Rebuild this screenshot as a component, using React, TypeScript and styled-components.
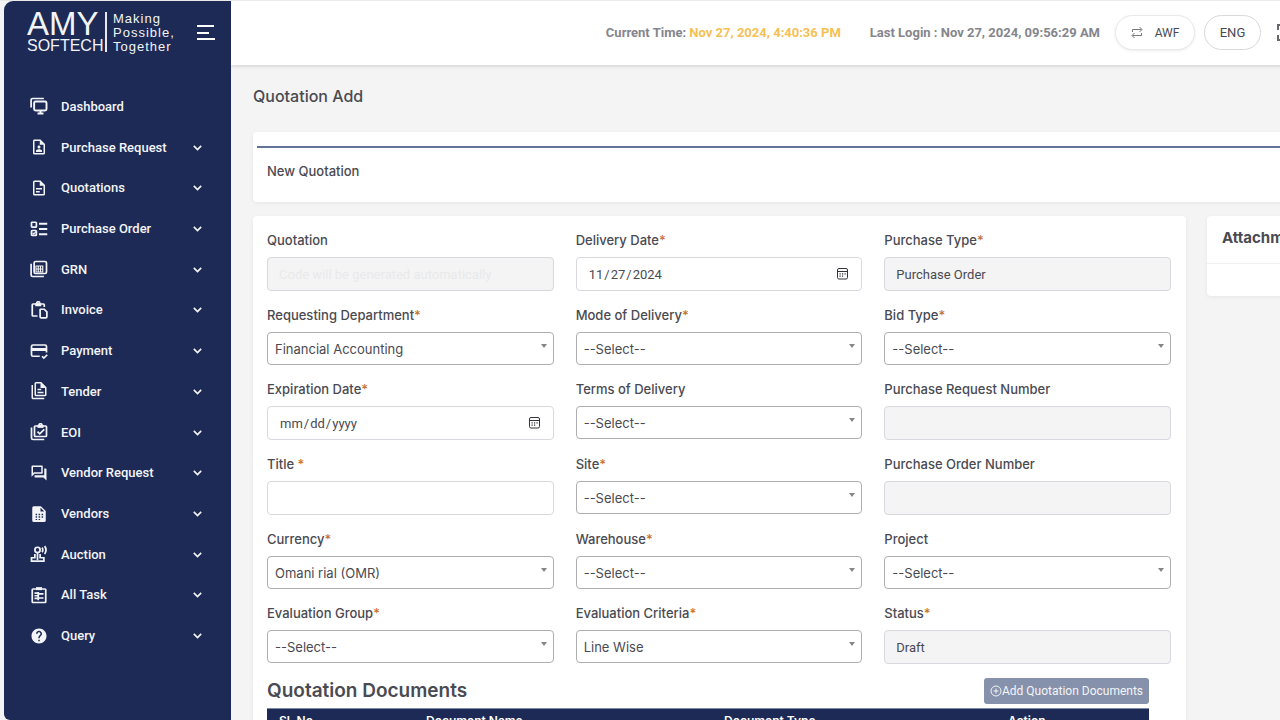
import React, { ReactNode, useId } from "react";
import styled, { createGlobalStyle, css } from "styled-components";
import { MdOutlineQuestionAnswer, MdHelp } from "react-icons/md";

const navy = "#1c2a55";
const ink = "#4a4a52";

const Global = createGlobalStyle`
  *, *::before, *::after { box-sizing: border-box; }
  body { margin: 0; background: #f4f4f4; }
  body, table, select { font-family: Inter, Roboto, sans-serif; font-size: 13px; color: ${ink}; }
  button, input { font-family: Roboto, Inter, sans-serif; font-size: 13px; color: ${ink}; }
  h1, h2, h3, p, ul { margin: 0; padding: 0; }
`;

const Shell = styled.div`
  display: flex;
  height: 100vh;
  overflow: hidden;
  padding-left: 4px;
  border-top: 1px solid #e9e9e9;
`;

const Sidebar = styled.aside`
  flex: 0 0 227px;
  background: ${navy};
  border-radius: 9px 0 0 6px;
  color: #f3f4f8;
`;

const Brand = styled.div`
  display: flex;
  align-items: flex-start;
  height: 85px;
  padding: 7px 16px 0 23px;
  font-family: "Liberation Sans", Arial, sans-serif;
`;

const BrandName = styled.div`
  width: 78px;
  height: 44px;
  padding-top: 2px;
`;

const BrandTop = styled.div`
  font-size: 33px;
  line-height: 28px;
`;

const BrandBottom = styled.div`
  font-size: 16px;
  line-height: 16px;
`;

const Slogan = styled.div`
  height: 40px;
  margin-top: 4px;
  padding-left: 6px;
  border-left: 2px solid #e7e9f0;
  font-size: 13px;
  line-height: 14px;
  letter-spacing: 1px;
  white-space: pre-line;
`;

const MenuButton = styled.button`
  display: flex;
  margin: 16px 0 0 auto;
  padding: 0;
  border: 0;
  background: none;
  color: #fff;
`;

const NavList = styled.ul`
  display: flex;
  flex-direction: column;
  height: 570px;
  list-style: none;
`;

const NavItem = styled.li`
  display: flex;
  flex: 1;
`;

const NavLink = styled.a`
  display: flex;
  flex: 1;
  align-items: center;
  padding: 0 28px 0 26px;
  color: inherit;
  font-family: Roboto, Inter, sans-serif;
  font-weight: 500;
  text-decoration: none;
`;

const NavText = styled.span`
  flex: 1;
  margin-left: 13px;
`;

const Main = styled.div`
  flex: 1;
  min-width: 0;
  overflow: hidden;
`;

const Header = styled.header`
  display: flex;
  align-items: center;
  justify-content: flex-end;
  height: 64px;
  margin-right: -16px;
  padding-bottom: 1px;
  background: #fff;
  box-shadow: 0 1px 4px rgba(0, 0, 0, 0.16);
  font-family: Roboto, Inter, sans-serif;
  font-weight: 700;
  color: #85868d;
  white-space: nowrap;
`;

const Stamp = styled.span`
  margin-right: 29px;
  & + & { margin-right: 15px; }
`;

const Accent = styled.span`
  color: #f6bf54;
`;

const Pill = styled.button<{ $raised?: boolean }>`
  display: flex;
  align-items: center;
  justify-content: center;
  gap: 12px;
  width: ${(p) => (p.$raised ? 80 : 57)}px;
  height: 35px;
  margin-right: ${(p) => (p.$raised ? 9 : 16)}px;
  padding: 0;
  border: 1px solid ${(p) => (p.$raised ? "#e9e9ec" : "#d9d9dc")};
  border-radius: 18px;
  background: #fff;
  box-shadow: ${(p) => (p.$raised ? "0 1px 3px rgba(0,0,0,.08)" : "none")};
  font-size: ${(p) => (p.$raised ? 12 : 13)}px;
`;

const IconButton = styled.button`
  display: flex;
  padding: 0;
  border: 0;
  background: none;
  color: #66676d;
`;

const Content = styled.main`
  width: calc(100% + 246px);
  padding: 21px 22px;
`;

const PageTitle = styled.h1`
  font-size: 16px;
  line-height: 20px;
  font-weight: 500;
`;

const Card = styled.section`
  background: #fff;
  border-radius: 4px;
  box-shadow: 0 1px 4px rgba(0, 0, 0, 0.06);
`;

const TitleCard = styled(Card)`
  height: 70px;
  margin: 26px 0 14px;
  padding: 14px 4px 0;
`;

const CardTitle = styled.h2`
  padding: 14px 10px;
  border-top: 2px solid #64739a;
  font-size: 13px;
  line-height: 18px;
  font-weight: 500;
`;

const Columns = styled.div`
  display: grid;
  grid-template-columns: minmax(0, 933fr) minmax(0, 297fr);
  align-items: start;
  gap: 21px;
`;

const FormCard = styled(Card)`
  padding: 15px 15px 40px 14px;
`;

const Fields = styled.form`
  display: grid;
  grid-template-columns: repeat(3, minmax(0, 1fr));
  gap: 15px 22px;
`;

const FieldBox = styled.div`
  display: flex;
  flex-direction: column;
  gap: 8px;
`;

const Label = styled.label`
  font-weight: 500;
  line-height: 18px;
`;

const Star = styled.span`
  color: #c8712f;
`;

const ControlWrap = styled.div<{ $arrow?: boolean }>`
  position: relative;
  ${(p) =>
    p.$arrow &&
    css`
      &::after {
        content: "";
        position: absolute;
        top: 12px;
        right: 7px;
        border: solid transparent;
        border-width: 4px 3px 0;
        border-top-color: #85858a;
        pointer-events: none;
      }
    `}
  svg {
    position: absolute;
    top: 10px;
    right: 13px;
    pointer-events: none;
  }
`;

const Input = styled.input`
  display: block;
  width: 100%;
  height: 34px;
  padding: 0 11px;
  border: 1px solid #d8d8de;
  border-radius: 4px;
  background: #fff;
  outline: none;
  &:read-only:not([type="date"]) { background: #f4f4f4; }
  &::placeholder { color: #e9e9eb; opacity: 1; }
  &::-webkit-calendar-picker-indicator { opacity: 0; }
  &::-webkit-datetime-edit-fields-wrapper { padding: 0; }
`;

const Select = styled.select`
  display: block;
  width: 100%;
  height: 33px;
  padding: 0 7px;
  border: 1px solid #aeaeb0;
  border-radius: 4px;
  background: #fff;
  appearance: none;
`;

const DocsHead = styled.div`
  display: flex;
  align-items: center;
  justify-content: space-between;
  margin: 14px 22px 4px 0;
`;

const DocsTitle = styled.h2`
  font-size: 19px;
  line-height: 22px;
  font-weight: 600;
`;

const AddButton = styled.button`
  display: flex;
  align-items: center;
  justify-content: center;
  width: 165px;
  height: 26px;
  padding: 0;
  border: 0;
  border-radius: 3px;
  background: #8691ab;
  color: #f3f5f9;
  font-size: 12px;
  white-space: nowrap;
`;

const DocsTable = styled.table`
  width: calc(100% - 22px);
  border-collapse: collapse;
  table-layout: fixed;
  border-top: 1px solid #7f8aa6;
`;

const Th = styled.th<{ $w?: number }>`
  width: ${(p) => (p.$w ? `${p.$w}px` : "auto")};
  height: 24px;
  padding: 0 12px;
  background: ${navy};
  color: #fff;
  font-size: 12px;
  font-weight: 600;
  text-align: left;
`;

const SideTitle = styled.h3`
  padding: 12px 15px 15px;
  border-bottom: 1px solid #f1f1f1;
  font-size: 15px;
  line-height: 20px;
  font-weight: 700;
`;

const SideBody = styled.div`
  height: 32px;
`;

const Glyph = ({ children, size = 18 }: { children: ReactNode; size?: number }) => (
  <svg width={size} height={size} viewBox="0 0 24 24" fill="currentColor" fillRule="evenodd" aria-hidden="true">
    {children}
  </svg>
);

const Line = ({ children, size = 18, w = 2.3 }: { children: ReactNode; size?: number; w?: number }) => (
  <svg width={size} height={size} viewBox="0 0 24 24" fill="none" stroke="currentColor" strokeWidth={w} aria-hidden="true">
    {children}
  </svg>
);

const nav: { text: string; icon: ReactNode }[] = [
  { text: "Dashboard", icon: <Line><path d="M1.500 14V4a2 2 0 0 1 2-2h15" /><rect x="5.500" y="6" width="16.500" height="12" rx="2" strokeWidth="2.600" /><path d="M10 22h8M14 18v4" strokeWidth="2.600" /></Line> },
  { text: "Purchase Request", icon: <Glyph><path d="M14,2H6C4.900,2 4,2.900 4,4V20A2,2 0 0,0 6,22H18A2,2 0 0,0 20,20V8L14,2M18,20H6V4H13V9H18V20M14,12C14,13.100 13.100,14 12,14C10.900,14 10,13.100 10,12C10,10.900 10.900,10 12,10C13.100,10 14,10.900 14,12M16,17V18.500H8V17C8,15.700 10.700,15 12,15C13.300,15 16,15.700 16,17Z" /></Glyph> },
  { text: "Quotations", icon: <Glyph><path d="M6,2A2,2 0 0,0 4,4V20A2,2 0 0,0 6,22H18A2,2 0 0,0 20,20V8L14,2H6M6,4H13V9H18V20H6V4M8,12V14H16V12H8M8,16V18H13V16H8Z" /></Glyph> },
  { text: "Purchase Order", icon: <Line><rect x="2" y="3" width="6.500" height="6.500" rx="1" /><rect x="2" y="14" width="6.500" height="6.500" rx="1" /><path d="M3.500 17l1.500 1.500 3-3" strokeWidth="1.500" /><path d="M12 5h11M12 12h11M12 19h11" strokeWidth="2.600" /></Line> },
  { text: "GRN", icon: <Line><path d="M1.500 5v15a2 2 0 0 0 2 2h15" /><rect x="5.500" y="2" width="16.500" height="16" rx="2" /><path d="M8 8h9v8H8zM8 12h9M11 8v8M14 8v8" strokeWidth="1.500" /></Line> },
  { text: "Invoice", icon: <Line><path d="M10 20H4a1 1 0 0 1-1-1V5a1 1 0 0 1 1-1h14a1 1 0 0 1 1 1v3" /><path d="M7 3h8v4H7z" fill="currentColor" stroke="none" /><path d="M9 3a2 2 0 0 1 4 0" /><path d="M14 11h5l3.500 3.500V21a1.500 1.500 0 0 1-1.500 1.500h-6a1.500 1.500 0 0 1-1.500-1.500v-9.500z" /></Line> },
  { text: "Payment", icon: <Line><path d="M13 19H4a2 2 0 0 1-2-2V6a2 2 0 0 1 2-2h16a2 2 0 0 1 2 2v8" /><path d="M2 8h20v4H2z" fill="currentColor" stroke="none" /><path d="M16 19l2.500 2.500 4.500-4.500" /></Line> },
  { text: "Tender", icon: <Glyph><path d="M8 0a2 2 0 0 0-2 2v15a2 2 0 0 0 2 2h12a2 2 0 0 0 2-2V7l-7-7H8m0 2h6v6h6v9H8V2m2 7v2h5V9h-5m0 4v2h8v-2h-8M2 4v17a2 2 0 0 0 2 2h15v-2H4V4H2z" /></Glyph> },
  { text: "EOI", icon: <Line><path d="M2 6v14a2 2 0 0 0 2 2h15" /><rect x="6" y="4" width="16" height="14" rx="1" /><path d="M10 2.500h8v4h-8z" fill="currentColor" stroke="none" /><path d="M12 3a2 2 0 0 1 4 0" /><path d="M10 11.500l3 3 6-6" /></Line> },
  { text: "Vendor Request", icon: <MdOutlineQuestionAnswer size={18} /> },
  { text: "Vendors", icon: <Glyph><path d="M5 1.500a2 2 0 0 0-2 2v17a2 2 0 0 0 2 2h14a2 2 0 0 0 2-2V8l-6.500-6.500H5M14 3.500l5 5h-5v-5M7.500 11.500h2v2h-2v-2m4 0h2v2h-2v-2m4 0h2v2h-2v-2m-8 3.500h2v2h-2v-2m4 0h2v2h-2v-2m4 0h2v2h-2v-2m-8 3.500h2v1.500h-2v-1.500m4 0h2v1.500h-2v-1.500" /></Glyph> },
  { text: "Auction", icon: <Line><circle cx="10" cy="6.500" r="3.500" /><path d="M10 10v10M6.500 12v5H2V21.500h16.500V17h-5v-5" /><path d="M16 3.500a5 5 0 0 1 0 6M19.500 1.500a9 9 0 0 1 0 10.500" /></Line> },
  { text: "All Task", icon: <Line><rect x="3" y="4" width="18" height="18" rx="1" /><path d="M8 1.500h8v4H8z" fill="currentColor" stroke="none" /><path d="M6 9.500h4M6 13h4M6 16.500h4M12 10.500h6M12 16h6M11 8v11" /></Line> },
  { text: "Query", icon: <MdHelp size={18} /> },
];

const Chevron = () => (
  <Line size={11} w={3.6}><path d="M4 8.500l8 8 8-8" /></Line>
);

const CalendarIcon = () => (
  <svg width="13" height="13" viewBox="0 0 13 13" fill="none" stroke="#333338" aria-hidden="true">
    <rect x="1.500" y="1.500" width="10" height="10.500" rx="1.500" />
    <path d="M1.500 4.500h10" />
    <path d="M3.500 6.800h1.200M6 6.800h1.200M8.500 6.800h1.200M3.500 9.200h1.200M6 9.200h1.200" strokeWidth="1.300" />
  </svg>
);

type FieldProps = {
  label: string;
  required?: boolean;
  kind: "select" | "text" | "readonly" | "date";
  value?: string;
  placeholder?: string;
};

const Field = ({ label, required, kind, value = "", placeholder }: FieldProps) => {
  const id = useId();
  return (
    <FieldBox>
      <Label htmlFor={id}>
        {label}
        {required && <Star>*</Star>}
      </Label>
      <ControlWrap $arrow={kind === "select"}>
        {kind === "select" ? (
          <Select id={id} defaultValue={value}>
            <option>{value}</option>
          </Select>
        ) : (
          <Input
            id={id}
            type={kind === "date" ? "date" : "text"}
            defaultValue={value}
            placeholder={placeholder}
            readOnly={kind === "readonly"}
          />
        )}
        {kind === "date" && <CalendarIcon />}
      </ControlWrap>
    </FieldBox>
  );
};

const fields: FieldProps[] = [
  { label: "Quotation", kind: "readonly", placeholder: "Code will be generated automatically" },
  { label: "Delivery Date", required: true, kind: "date", value: "2024-11-27" },
  { label: "Purchase Type", required: true, kind: "readonly", value: "Purchase Order" },
  { label: "Requesting Department", required: true, kind: "select", value: "Financial Accounting" },
  { label: "Mode of Delivery", required: true, kind: "select", value: "--Select--" },
  { label: "Bid Type", required: true, kind: "select", value: "--Select--" },
  { label: "Expiration Date", required: true, kind: "date" },
  { label: "Terms of Delivery", kind: "select", value: "--Select--" },
  { label: "Purchase Request Number", kind: "readonly" },
  { label: "Title ", required: true, kind: "text" },
  { label: "Site", required: true, kind: "select", value: "--Select--" },
  { label: "Purchase Order Number", kind: "readonly" },
  { label: "Currency", required: true, kind: "select", value: "Omani rial (OMR)" },
  { label: "Warehouse", required: true, kind: "select", value: "--Select--" },
  { label: "Project", kind: "select", value: "--Select--" },
  { label: "Evaluation Group", required: true, kind: "select", value: "--Select--" },
  { label: "Evaluation Criteria", required: true, kind: "select", value: "Line Wise" },
  { label: "Status", required: true, kind: "readonly", value: "Draft" },
];

export default function App() {
  return (
    <Shell>
      <Global />
      <Sidebar>
        <Brand>
          <BrandName>
            <BrandTop>AMY</BrandTop>
            <BrandBottom>SOFTECH</BrandBottom>
          </BrandName>
          <Slogan>{"Making\nPossible,\nTogether"}</Slogan>
          <MenuButton aria-label="Toggle menu">
            <svg width="18" height="17" viewBox="0 0 18 17" stroke="currentColor" strokeWidth="2" aria-hidden="true">
              <path d="M0 2h17M0 9h12M0 15h18" />
            </svg>
          </MenuButton>
        </Brand>
        <nav>
          <NavList>
            {nav.map((item, i) => (
              <NavItem key={item.text}>
                <NavLink href="#">
                  {item.icon}
                  <NavText>{item.text}</NavText>
                  {i > 0 && <Chevron />}
                </NavLink>
              </NavItem>
            ))}
          </NavList>
        </nav>
      </Sidebar>
      <Main>
        <Header>
          <Stamp>
            Current Time: <Accent>Nov 27, 2024, 4:40:36 PM</Accent>
          </Stamp>
          <Stamp>Last Login : Nov 27, 2024, 09:56:29 AM</Stamp>
          <Pill $raised>
            <svg width="12" height="13" viewBox="0 0 12 13" fill="none" stroke="#77787e" aria-hidden="true">
              <path d="M1.500 6V3.500h9M8.500 1l2.500 2.500L8.500 6M10.500 7v2.500h-9M3.500 7L1 9.500 3.500 12" />
            </svg>
            AWF
          </Pill>
          <Pill>ENG</Pill>
          <IconButton aria-label="Full screen">
            <svg width="19" height="17" viewBox="0 0 19 17" fill="none" stroke="currentColor" strokeWidth="2" aria-hidden="true">
              <path d="M1 6V1h5M13 1h5v5M18 11v5h-5M6 16H1v-5" />
            </svg>
          </IconButton>
        </Header>
        <Content>
          <PageTitle>Quotation Add</PageTitle>
          <TitleCard>
            <CardTitle>New Quotation</CardTitle>
          </TitleCard>
          <Columns>
            <FormCard>
              <Fields>
                {fields.map((f) => (
                  <Field key={f.label} {...f} />
                ))}
              </Fields>
              <DocsHead>
                <DocsTitle>Quotation Documents</DocsTitle>
                <AddButton>
                  <Line size={12} w={2}><circle cx="12" cy="12" r="10" /><path d="M12 7v10M7 12h10" /></Line>
                  Add Quotation Documents
                </AddButton>
              </DocsHead>
              <DocsTable>
                <thead>
                  <tr>
                    <Th $w={147}>Sl. No</Th>
                    <Th $w={298}>Document Name</Th>
                    <Th $w={284}>Document Type</Th>
                    <Th>Action</Th>
                  </tr>
                </thead>
              </DocsTable>
            </FormCard>
            <Card>
              <SideTitle>Attachments</SideTitle>
              <SideBody />
            </Card>
          </Columns>
        </Content>
      </Main>
    </Shell>
  );
}
